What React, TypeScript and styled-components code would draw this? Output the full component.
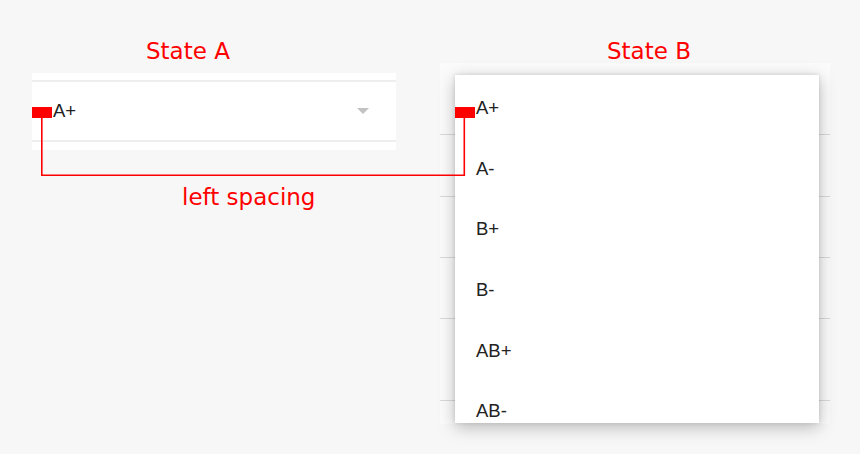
import React from "react";
import styled, { createGlobalStyle } from "styled-components";

const GlobalStyle = createGlobalStyle`
  html, body { margin: 0; padding: 0; background: #f7f7f7; }
  * { box-sizing: border-box; }
`;

const Page = styled.div`
  position: relative;
  width: 860px;
  height: 454px;
  display: flex;
  padding-left: 32px;
  overflow: hidden;
  background: #f7f7f7;
`;

const Column = styled.div<{ $offset: number; $width: number }>`
  display: flex;
  flex-direction: column;
  margin-left: ${(p) => p.$offset}px;
  width: ${(p) => p.$width}px;
  padding-top: 40px;
`;

const Title = styled.div<{ $indent: number }>`
  font-family: "DejaVu Sans", sans-serif;
  font-size: 23px;
  line-height: 23px;
  height: 23px;
  color: #ff0000;
  padding-left: ${(p) => p.$indent}px;
  white-space: nowrap;
`;

const SelectPanel = styled.div`
  margin-top: 10px;
  background: #ffffff;
  padding: 7px 0 8px;
`;

const SelectRow = styled.div`
  height: 62px;
  border-top: 2px solid #eeeeee;
  border-bottom: 2px solid #eeeeee;
  display: flex;
  align-items: center;
  justify-content: space-between;
  padding: 0 27px 0 21px;
`;

const Value = styled.span`
  font-family: "Liberation Sans", Arial, sans-serif;
  font-size: 18.5px;
  line-height: 20px;
  color: #222222;
`;

const Caret = styled.span`
  width: 0;
  height: 0;
  border-left: 6px solid transparent;
  border-right: 6px solid transparent;
  border-top: 6px solid #c2c2c2;
  margin-top: -1px;
`;

const Backdrop = styled.div`
  position: relative;
  height: 361px;
  background: #fbfbfb;
  display: flex;
  flex-direction: column;
`;

const BackdropRow = styled.div<{ $h: number }>`
  height: ${(p) => p.$h}px;
  flex: none;
  border-bottom: 1px solid #dadada;
`;

const Menu = styled.div`
  position: absolute;
  left: 15px;
  top: 12px;
  width: 364px;
  height: 348px;
  background: #ffffff;
  box-shadow: 0 4px 16px rgba(0, 0, 0, 0.26), 0 0 4px rgba(0, 0, 0, 0.12);
  overflow: hidden;
  padding-top: 3px;
`;

const MenuItem = styled.div`
  height: 60.6px;
  display: flex;
  align-items: center;
  padding-left: 21px;
  font-family: "Liberation Sans", Arial, sans-serif;
  font-size: 18.5px;
  line-height: 20px;
  color: #222222;
`;

const Annotation = styled.svg`
  position: absolute;
  left: 0;
  top: 0;
  pointer-events: none;
`;

const AnnotationLabel = styled.div`
  position: absolute;
  left: 182px;
  top: 186px;
  font-family: "DejaVu Sans", sans-serif;
  font-size: 23px;
  line-height: 23px;
  color: #ff0000;
  white-space: nowrap;
  pointer-events: none;
`;

const options = ["A+", "A-", "B+", "B-", "AB+", "AB-"];
const backdropRows = [72, 62, 61, 61, 82];

export default function App() {
  return (
    <>
      <GlobalStyle />
      <Page>
        <Column $offset={0} $width={364}>
          <Title $indent={114}>State A</Title>
          <SelectPanel>
            <SelectRow>
              <Value>A+</Value>
              <Caret />
            </SelectRow>
          </SelectPanel>
        </Column>
        <Column $offset={44} $width={390}>
          <Title $indent={167}>State B</Title>
          <Backdrop>
            {backdropRows.map((h, i) => (
              <BackdropRow key={i} $h={h} />
            ))}
            <Menu>
              {options.map((o) => (
                <MenuItem key={o}>{o}</MenuItem>
              ))}
            </Menu>
          </Backdrop>
        </Column>
        <Annotation width={860} height={454} viewBox="0 0 860 454">
          <rect x={32} y={107} width={20} height={11} fill="#ff0000" />
          <rect x={455} y={107} width={20} height={11} fill="#ff0000" />
          <path
            d="M41.8 118 V175.3 H464.3 V117"
            fill="none"
            stroke="#ff0000"
            strokeWidth={1.6}
          />
        </Annotation>
        <AnnotationLabel>left spacing</AnnotationLabel>
      </Page>
    </>
  );
}
